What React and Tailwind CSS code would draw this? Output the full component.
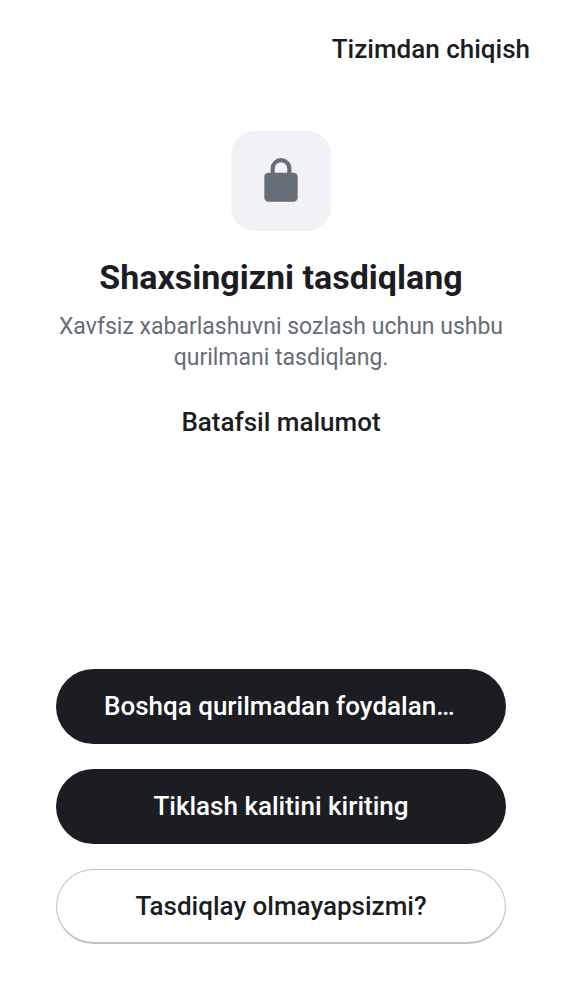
export default function App() {
  return (
    <div className="flex min-h-screen flex-col bg-white font-['Roboto',sans-serif] text-[#1b1d22]">
      <header className="flex justify-end px-8 pt-8">
        <button type="button" className="text-[26px] leading-[35px] font-medium">Tizimdan chiqish</button>
      </header>
      <main className="flex flex-1 flex-col items-center px-14 pt-16">
        <div className="flex size-[100px] items-center justify-center rounded-[24px] bg-[#f0f2f5]">
          <svg viewBox="0 0 50 50" className="size-[50px]" fill="#656d77" aria-hidden="true">
            <path fillRule="evenodd" d="M12.5 45.8a4 4 0 0 1-2.94-1.22 4 4 0 0 1-1.23-2.95V20.8a4 4 0 0 1 1.23-2.94 4 4 0 0 1 2.94-1.23h2.1V12.5q0-4.3 3.04-7.36A10.04 10.04 0 0 1 25 2.1q4.3 0 7.36 3.04A10.04 10.04 0 0 1 35.4 12.5v4.13h2.1q1.72 0 2.94 1.23a4 4 0 0 1 1.23 2.94v20.83q0 1.72-1.23 2.95a4 4 0 0 1-2.94 1.22zM18.75 16.63h12.5V12.5q0-2.6-1.82-4.43A6.03 6.03 0 0 0 25 6.25q-2.6 0-4.43 1.82a6.03 6.03 0 0 0-1.82 4.43z" />
          </svg>
        </div>
        <h1 className="mt-6 text-center text-[34px] leading-11 font-bold">Shaxsingizni tasdiqlang</h1>
        <p className="mt-3 text-center text-[23px] leading-[31px] text-[#656d77]">Xavfsiz xabarlashuvni sozlash uchun ushbu qurilmani tasdiqlang.</p>
        <button type="button" className="mt-8 text-[26px] leading-[35px] font-medium">Batafsil malumot</button>
      </main>
      <footer className="flex flex-col gap-[25px] px-14 pb-14">
        <button type="button" className="h-[75px] truncate rounded-full bg-[#1b1d22] px-12 text-[26px] font-medium text-white">Boshqa qurilmadan foydalanish</button>
        <button type="button" className="h-[75px] truncate rounded-full bg-[#1b1d22] px-12 text-[26px] font-medium text-white">Tiklash kalitini kiriting</button>
        <button type="button" className="h-[75px] truncate rounded-full border border-b-2 border-[#bdc3cc] px-12 text-[26px] font-medium">Tasdiqlay olmayapsizmi?</button>
      </footer>
    </div>
  );
}
